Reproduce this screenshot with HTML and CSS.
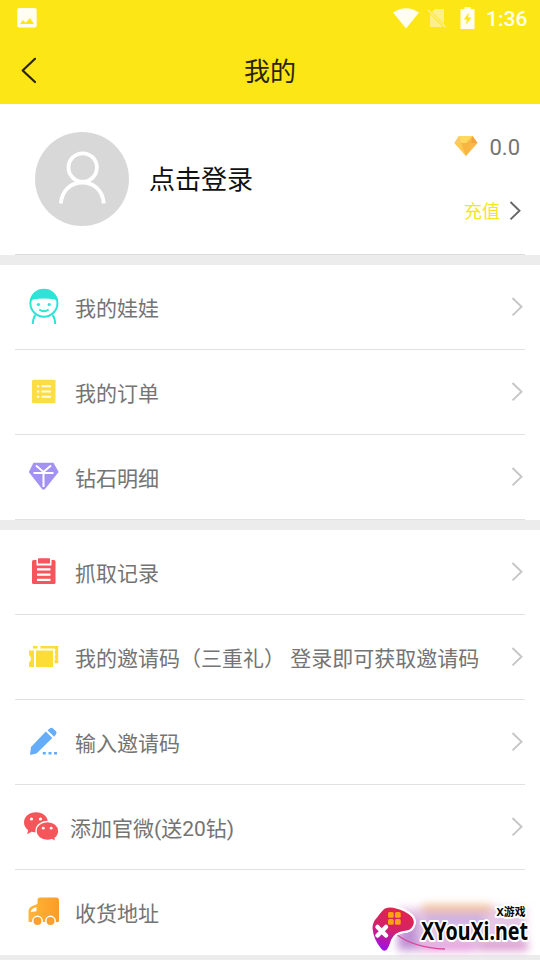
FILE: index.html
```html
<!DOCTYPE html>
<html lang="zh-CN">
<head>
<meta charset="utf-8">
<title>我的</title>
<link rel="stylesheet" href="styles.css">
</head>
<body>
<svg class="defs" width="0" height="0">
  <symbol id="chevron" viewBox="0 0 12 20"><path d="M1.500 1 10.500 9.700 1.500 18.400" fill="none" stroke="currentColor" stroke-width="1.900"/></symbol>
</svg>
<div class="app">
  <header class="header">
    <div class="status">
      <svg width="20" height="20" viewBox="0 0 20 20"><rect width="19.5" height="19.5" x=".2" rx="2" fill="#fffef0"/><path d="M3 16 6 12l2.600 2.700L13 10l4 6z" fill="#fce615"/></svg>
      <div class="status-right">
        <svg width="26" height="21" viewBox="0 0 26 21"><path d="M0 4.500Q13-4.200 26 4.500L13 20.500z" fill="#fffef0"/></svg>
        <svg width="20" height="20" viewBox="0 0 20 20"><path d="M8 1h9v14.500L5 4zM3 6l13 13H3z" fill="#fdf08a"/><path d="M1 2l17.500 17" stroke="#fdf08a" stroke-width="1.600"/></svg>
        <svg width="15" height="22" viewBox="0 0 15 22"><path d="M4.500 0h6v2H14.500v20H.5V2h4z" fill="#fffef0"/><path d="M9 5.500 3.700 12.500h3.100l-.8 5.500 5.300-7.500H8z" fill="#fce615"/></svg>
        <span class="clock">1:36</span>
      </div>
    </div>
    <div class="titlebar">
      <svg class="back" width="18" height="28" viewBox="0 0 18 28"><path d="M15 2.800 2.700 14.500 15 26" fill="none" stroke="#2a230c" stroke-width="2.200" stroke-linecap="round" stroke-linejoin="round"/></svg>
      <h1>我的</h1>
    </div>
  </header>

  <section class="profile">
    <div class="profile-inner">
      <svg class="avatar" width="94" height="94" viewBox="0 0 94 94"><circle cx="47" cy="47" r="47" fill="#d8d8d8"/><g fill="none" stroke="#fff" stroke-width="3.800"><circle cx="47.700" cy="35.500" r="14.200"/><path d="M25.800 71.500C27 58 36.500 50.500 47.300 50.500S67.800 58 68.800 71.500"/></g></svg>
      <span class="login">点击登录</span>
      <div class="wallet">
        <div class="balance">
          <svg width="24" height="20" viewBox="0 0 24 20"><path d="M5 0h13.500L23.500 7 12 20 .5 7z" fill="#f9b849"/><path d="M5 0 .5 7H7z" fill="#fbc96a"/><path d="M5 0h13.500L12 7H7z" fill="#ffd95b"/><path d="M7 7l5 13L17 7z" fill="#f7b63f"/><path d="M.5 7H7l5 13z" fill="#fdca51"/><path d="M18.500 0 17 7h6.500z" fill="#f4a43d"/></svg>
          <span>0.0</span>
        </div>
        <div class="recharge"><span>充值</span><svg width="12" height="20"><use href="#chevron"/></svg></div>
      </div>
    </div>
  </section>

  <section class="group">
    <div class="row">
      <svg class="icon" viewBox="0 0 40 40"><circle cx="19.900" cy="16.200" r="13.500" fill="#fff" stroke="#2ce5d6" stroke-width="2"/><path d="M6.200 15C7 6 13 2 20 2s13 4 13.700 13L31 12.500q-11-2-22 0z" fill="#2ce5d6"/><circle cx="14.400" cy="17.500" r="1.600" fill="#2ce5d6"/><circle cx="25.200" cy="17.500" r="1.600" fill="#2ce5d6"/><path d="M15.200 22.500q4.700 3.500 9.400 0M11.500 28Q9 31 8.800 37M28.500 28q2.500 3 2.700 9" fill="none" stroke="#2ce5d6" stroke-width="2"/></svg>
      <span class="label">我的娃娃</span><svg class="arrow"><use href="#chevron"/></svg>
    </div>
    <div class="row">
      <svg class="icon" viewBox="0 0 40 40"><rect x="8" y="7.700" width="23.500" height="23.500" rx="1.500" fill="#fcdd45"/><path d="M13 14.300h2.300M13 19.500h2.300M13 24.700h2.300M17.500 14.300h9.500M17.500 19.500h9.500M17.500 24.700h9.500" stroke="#fffbe0" stroke-width="2"/></svg>
      <span class="label">我的订单</span><svg class="arrow"><use href="#chevron"/></svg>
    </div>
    <div class="row">
      <svg class="icon" viewBox="0 0 40 40"><path d="M9.500 5.700h20L34.700 15 21 32q-1.500 1.500-3 0L4.800 15z" fill="#a392f3"/><path d="M12 8.500l7.500 6.500 7.500-6.500M9.500 16h20M19.500 14.500V30" fill="none" stroke="#fff" stroke-width="2"/></svg>
      <span class="label">钻石明细</span><svg class="arrow"><use href="#chevron"/></svg>
    </div>
  </section>

  <section class="group">
    <div class="row">
      <svg class="icon" viewBox="0 0 40 40"><path d="M9.500 8h20.500q1.500 0 1.500 1.500v21q0 1.500-1.500 1.500H9.500Q8 32 8 30.500v-21Q8 8 9.500 8z" fill="#f5555b"/><path d="M12.500 8h15v5.500h-15z" fill="#fff"/><path d="M14 7q0-.7.7-.7h10.600q.7 0 .7.700v4.500H14z" fill="#f5555b"/><path d="M13 17.300h13.500M13 22.600h13.500M13 27.800h13.500" stroke="#fff" stroke-width="2.200"/></svg>
      <span class="label">抓取记录</span><svg class="arrow"><use href="#chevron"/></svg>
    </div>
    <div class="row">
      <svg class="icon" viewBox="0 0 40 40"><path d="M5 13.500h5V30H5v-4.500q2-.8 2-3.500t-2-4zM12 13.500h17V30H12z" fill="#fcdd38"/><path d="M9 10.300h4.500M16.500 10.300h16.200V25H30" fill="none" stroke="#fcdd38" stroke-width="2.400"/><path d="M32.500 9v17" stroke="#fcdd38" stroke-width="3.500" stroke-dasharray="3.500 1"/><path d="M30 12v15M11 14v15" stroke="#fff" stroke-width="1" stroke-dasharray="2 1"/></svg>
      <span class="label">我的邀请码（三重礼）&nbsp;登录即可获取邀请码</span><svg class="arrow"><use href="#chevron"/></svg>
    </div>
    <div class="row">
      <svg class="icon" viewBox="0 0 40 40"><path d="M21.800 9.500 28.300 16 12.500 31.500 6 33 7 25z" fill="#65adf8"/><path d="M23.500 8.200 26 6.300q1.500-1 3 .3l3 2.700q1.200 1.500 0 3L30.200 14.800z" fill="#65adf8"/><path d="M18.800 31.300h3M24.500 31.300h3M30 31.300h3" stroke="#65adf8" stroke-width="2.500"/></svg>
      <span class="label">输入邀请码</span><svg class="arrow"><use href="#chevron"/></svg>
    </div>
    <div class="row row-tight">
      <svg class="icon" viewBox="0 0 40 40"><path d="M12 5.300C5 5.300 0 10 0 15.500c0 3.500 2 6 4.200 7.700L3 27.300l4.500-2.500q2.500.7 5 .7C19 25.500 24 21 24 15.500S19 5.300 12 5.300z" fill="#f5555b"/><path d="M23.500 14.500C17 14.500 12 18.500 12 24s5 9.300 11.300 9.300q2.500 0 4.700-.7l4 2.200-1-3.500c2.200-1.600 3.700-4 3.700-7.300 0-5.500-4.900-9.500-11.200-9.500z" fill="#f5555b" stroke="#fff" stroke-width="1.300"/><g fill="#fff"><circle cx="7.500" cy="12" r="1.600"/><circle cx="16.500" cy="12" r="1.600"/><circle cx="19.300" cy="21.200" r="1.400"/><circle cx="27.200" cy="21.200" r="1.400"/></g></svg>
      <span class="label">添加官微(送20钻)</span><svg class="arrow"><use href="#chevron"/></svg>
    </div>
    <div class="row">
      <svg class="icon" viewBox="0 0 40 40"><defs><linearGradient id="truck" x1="0" x2="1"><stop offset="0" stop-color="#ffb638"/><stop offset="1" stop-color="#fb9c27"/></linearGradient></defs><path d="M16 5.500h16q3 0 3 3V29q0 1-1 1H5.500q-1 0-1-1V19q0-2 1.500-3.500T13.500 12V8q0-2.500 2.500-2.500z" fill="url(#truck)"/><path d="M6.800 20q0-3.500 5.700-5v4.300z" fill="#fff"/><g fill="#fba02a" stroke="#fff" stroke-width="1.500"><circle cx="13.500" cy="29" r="4.700"/><circle cx="26.500" cy="29" r="4.700"/></g></svg>
      <span class="label">收货地址</span>
    </div>
  </section>
</div>

<svg class="badge" width="180" height="70" viewBox="0 0 180 70">
  <defs>
    <linearGradient id="pad" x1=".6" y1="0" x2=".3" y2="1"><stop offset="0" stop-color="#df264b"/><stop offset=".5" stop-color="#d6206a"/><stop offset="1" stop-color="#9a12e8"/></linearGradient>
    <filter id="soft" x="-20%" y="-50%" width="140%" height="200%"><feGaussianBlur stdDeviation="4.500"/></filter>
  </defs>
  <g filter="url(#soft)">
    <path d="M38 18h128v43H38z" fill="#e6c8e6"/>
    <path d="M62 15h70v7H62z" fill="#efb68a"/>
    <path d="M38 28h20v32H38z" fill="#c092d6"/>
    <path d="M60 52h55v9H60z" fill="#e59bde"/>
    <path d="M118 52h50v8h-50z" fill="#dc96cf"/>
    <path d="M65 26h60v8H65z" fill="#bfa8e2"/>
  </g>
  <path d="M36 44q18 14 49 15" fill="none" stroke="#d94a9b" stroke-width="1.500"/>
  <path d="M25 18.500q5-2 11 0 9 2 15.500 8 4 5 1 10-2 4-9 4.500-9 1-12.500 9-2 7-4.500 10-3 2-5-1-8-9-9-21 0-6 5-11 4-6 7.500-8.500z" fill="url(#pad)" stroke="#fff" stroke-width="4.500" stroke-linejoin="round" paint-order="stroke"/>
  <g fill="#ffa313"><rect x="28" y="22" width="5.700" height="5.700" rx="1.500"/><rect x="35" y="22" width="5.700" height="5.700" rx="1.500"/><rect x="28" y="29" width="5.700" height="5.700" rx="1.500"/><rect x="35" y="29" width="5.700" height="5.700" rx="1.500"/></g>
  <path d="m17.500 37 8.500 8.500m0-8.500-8.500 8.500" stroke="#fff" stroke-width="4.500" stroke-linecap="round"/>
  <text class="badge-small" x="136.500" y="26" textLength="29" lengthAdjust="spacingAndGlyphs">X游戏</text>
  <text class="badge-name" x="61" y="50" textLength="107" lengthAdjust="spacingAndGlyphs">XYouXi.net</text>
</svg>
</body>
</html>
```
FILE: styles.css
```css
* { box-sizing: border-box; }

body {
  margin: 0;
  height: 960px;
  overflow: hidden;
  position: relative;
  background: #ececec;
  color: #747474;
  font-family: Roboto, "Noto Sans CJK SC", sans-serif;
}

svg { display: block; flex: none; }
.defs { position: absolute; }

.app { display: flex; flex-direction: column; gap: 10px; }

.header { height: 104px; background: #fce615; margin-bottom: -10px; }

.status {
  height: 36px;
  padding: 0 12px 0 17px;
  display: flex;
  align-items: center;
  justify-content: space-between;
}

.status-right { display: flex; align-items: center; }
.status-right svg:nth-child(2) { margin-left: 8px; }
.status-right svg:nth-child(3) { margin-left: 13px; }
.clock {
  margin-left: 11px;
  width: 42px;
  font-size: 21px;
  font-weight: 500;
  line-height: 36px;
  padding-top: 2px;
  color: #fffef0;
  white-space: nowrap;
}

.titlebar {
  height: 68px;
  display: grid;
  grid-template-columns: 60px 1fr 60px;
  align-items: center;
}
.back { margin-left: 20px; }
.titlebar h1 {
  margin: 0;
  padding-top: 3px;
  text-align: center;
  color: #2a230c;
  font-size: 26px;
  font-weight: 400;
  line-height: 40px;
}

.profile { height: 151px; background: #fff; padding: 0 15px; }
.profile-inner {
  height: 151px;
  border-bottom: 1px solid #ddd;
  padding: 0 5px 0 20px;
  display: flex;
  align-items: center;
}
.login { margin-left: 20px; padding-top: 2px; color: #111; font-size: 26px; line-height: 40px; }
.wallet {
  margin-left: auto;
  margin-right: -1px;
  align-self: stretch;
  padding-top: 28px;
  display: flex;
  flex-direction: column;
  align-items: flex-end;
  gap: 35px;
}
.balance { display: flex; align-items: center; gap: 12px; height: 30px; font-size: 22px; margin-right: 1px; }
.balance svg { margin-top: -3px; margin-right: -1px; }
.recharge { display: flex; align-items: center; gap: 9px; height: 28px; font-size: 18px; line-height: 26px; color: #f4e51c; }
.recharge span { padding-top: 1px; }
.recharge svg { color: #666; }

.group { background: #fff; padding: 0 15px; }
.row {
  height: 85px;
  border-bottom: 1px solid #e1e1e1;
  padding: 0 2px 0 9px;
  display: flex;
  align-items: center;
  font-size: 21px;
  white-space: nowrap;
}
.group:last-child .row:last-child { border-bottom-color: #fff; }
.label { padding-bottom: 1px; }
.icon { width: 40px; height: 40px; margin-right: 11px; }
.row-tight .icon { margin-right: 6px; }
.arrow { width: 12px; height: 20px; margin-left: auto; color: #c6c6c6; }

.badge { position: absolute; left: 360px; top: 890px; }
.badge text { paint-order: stroke; stroke: #fff; stroke-linejoin: round; fill: #050505; font-weight: 700; }
.badge-small { font: 700 11px "Noto Sans", "Noto Sans CJK SC", sans-serif; stroke-width: 4px; }
.badge-name { font: 700 25px "Noto Sans", "Open Sans", sans-serif; stroke-width: 4px; }
```
